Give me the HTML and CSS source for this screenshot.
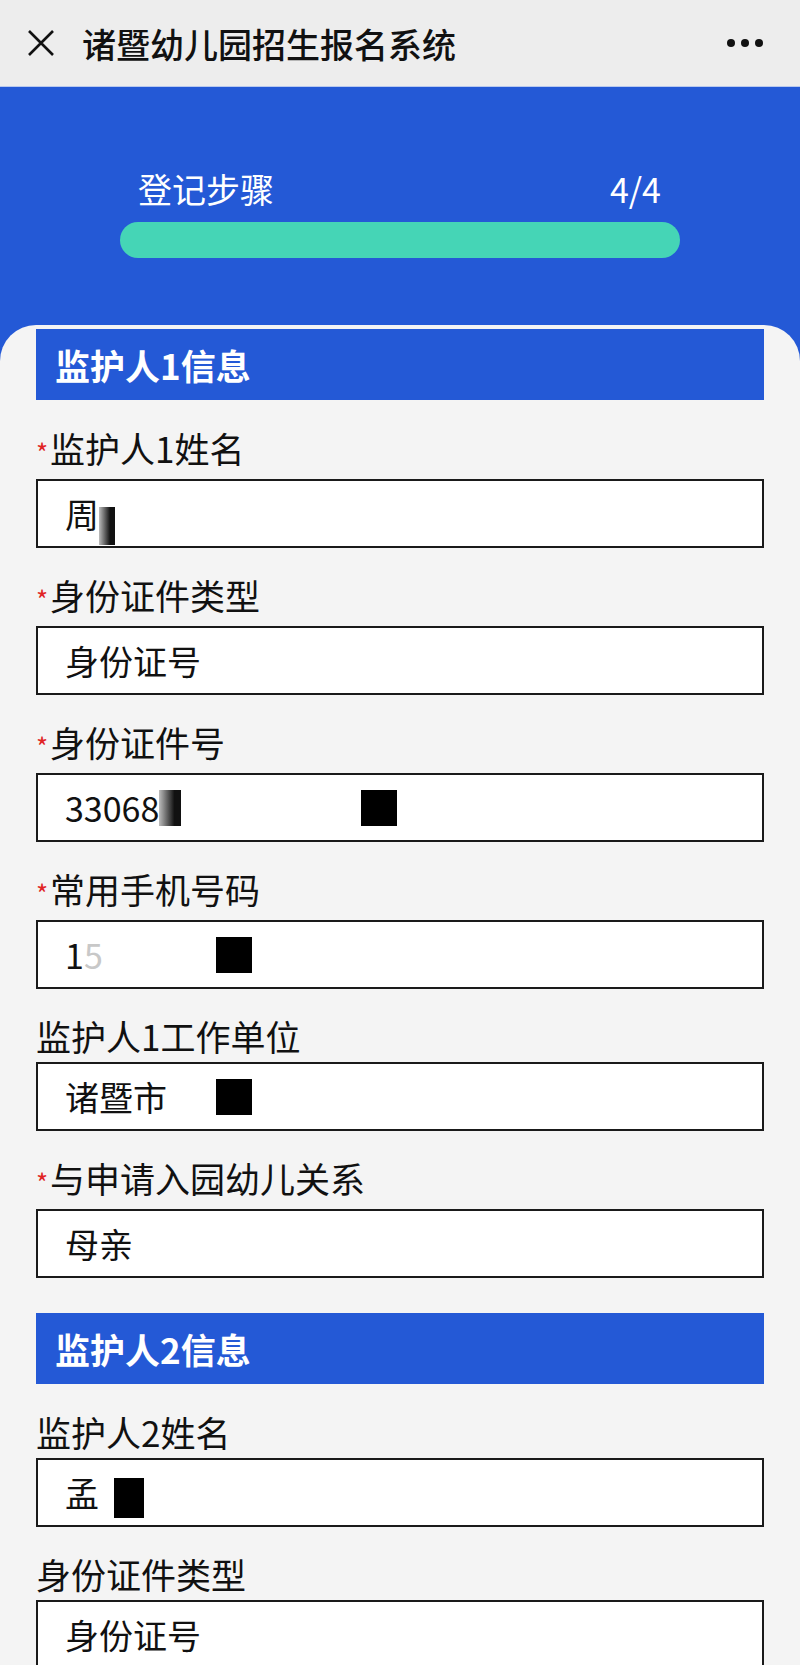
FILE: index.html
```html
<!DOCTYPE html>
<html lang="zh-CN">
<head>
    <meta charset="UTF-8">
    <meta name="viewport" content="width=device-width, initial-scale=1.0">
    <title>诸暨幼儿园招生报名系统</title>
    <link rel="stylesheet" href="styles.css">
</head>
<body>

    <!-- 顶部标题栏 -->
    <div class="top-bar">
        <svg class="close-icon" width="28" height="28" viewBox="0 0 28 28">
            <path d="M2 2 L26 26 M26 2 L2 26" stroke="#111" stroke-width="2.6" fill="none"/>
        </svg>
        <div class="top-title">诸暨幼儿园招生报名系统</div>
        <div class="more-dots">
            <span></span><span></span><span></span>
        </div>
    </div>

    <div class="page">
        <!-- 登记步骤 -->
        <div class="steps">
            <div class="steps-row">
                <span>登记步骤</span>
                <span>4/4</span>
            </div>
            <div class="steps-bar"></div>
        </div>

        <div class="card">
            <div class="section-title">监护人1信息</div>

            <div class="field">
                <div class="field-label is-required"><span class="required">*</span>监护人1姓名</div>
                <div class="field-box">周<span class="mask mask-fade mask-name1"></span></div>
            </div>

            <div class="field">
                <div class="field-label is-required"><span class="required">*</span>身份证件类型</div>
                <div class="field-box">身份证号</div>
            </div>

            <div class="field">
                <div class="field-label is-required"><span class="required">*</span>身份证件号</div>
                <div class="field-box">33068<span class="mask mask-fade mask-id1"></span><span class="mask mask-id2"></span></div>
            </div>

            <div class="field">
                <div class="field-label is-required"><span class="required">*</span>常用手机号码</div>
                <div class="field-box">1<span class="faded">5</span><span class="mask mask-phone"></span></div>
            </div>

            <div class="field">
                <div class="field-label">监护人1工作单位</div>
                <div class="field-box">诸暨市<span class="mask mask-work"></span></div>
            </div>

            <div class="field">
                <div class="field-label is-required"><span class="required">*</span>与申请入园幼儿关系</div>
                <div class="field-box">母亲</div>
            </div>

            <div class="section-title section-gap">监护人2信息</div>

            <div class="field">
                <div class="field-label">监护人2姓名</div>
                <div class="field-box">孟<span class="mask mask-name2"></span></div>
            </div>

            <div class="field">
                <div class="field-label">身份证件类型</div>
                <div class="field-box">身份证号</div>
            </div>
        </div>
    </div>

</body>
</html>
```

FILE: styles.css
```css
body {
    margin: 0;
    font-family: "Noto Sans CJK SC", "Noto Sans", sans-serif;
    color: #111;
    background-color: #2459d6;
}

/* --- 顶部标题栏 --- */
.top-bar {
    height: 86px;
    background-color: #ededed;
    border-bottom: 1px solid #b9c9ee;
    display: flex;
    align-items: center;
    padding: 0 37px 0 27px;
}

.close-icon {
    flex-shrink: 0;
}

.top-title {
    margin-left: 27px;
    font-size: 34px;
    font-weight: 500;
    flex: 1;
}

.more-dots {
    display: flex;
    gap: 6px;
}

.more-dots span {
    width: 8px;
    height: 8px;
    border-radius: 50%;
    background-color: #111;
}

/* --- 登记步骤 --- */
.steps {
    width: 560px;
    margin: 0 auto 0 120px;
    padding: 80px 0 67px;
}

.steps-row {
    display: flex;
    justify-content: space-between;
    padding: 0 19px 0 18px;
    color: #fff;
    font-size: 34px;
    line-height: 44px;
}

.steps-bar {
    margin-top: 11px;
    height: 36px;
    border-radius: 18px;
    background-color: #45d5b6;
}

/* --- 白色卡片 --- */
.card {
    background-color: #f4f4f4;
    border-radius: 36px 36px 0 0;
    padding: 4px 36px 60px;
}

.section-title {
    height: 71px;
    line-height: 71px;
    padding-left: 19px;
    background-color: #2459d6;
    color: #fff;
    font-size: 35px;
    font-weight: bold;
}

.section-gap {
    margin-top: 35px;
}

.field {
    margin-top: 27px;
}

.section-title + .field {
    margin-top: 28px;
}

.field-label {
    font-size: 35px;
    line-height: 40px;
    margin-bottom: 6px;
}

/* 必填项（带星号）的标签稍高一些 */
.field-label.is-required {
    margin-bottom: 11px;
}

.required {
    display: inline-block;
    width: 14px;
    font-size: 26px;
    line-height: 1;
    color: #e02424;
    vertical-align: 0;
}

.field-box {
    height: 69px;
    box-sizing: border-box;
    border: 2px solid #1a1a1a;
    background-color: #fff;
    padding-left: 27px;
    display: flex;
    align-items: center;
    font-size: 34px;
}

.faded {
    color: #c8c8c8;
}

/* 打码部分 */
.mask {
    display: inline-block;
    background-color: #000;
    height: 36px;
    flex-shrink: 0;
}

.mask-fade {
    background: linear-gradient(to right, #bdbdbd, #111 70%);
}

.mask-name1 {
    width: 16px;
    height: 38px;
    margin-left: 0;
    margin-top: 24px;
}

.mask-id1 {
    width: 22px;
    height: 36px;
    margin-left: 0;
}

.mask-id2 {
    width: 36px;
    margin-left: 180px;
}

.mask-phone {
    width: 36px;
    margin-left: 113px;
}

.mask-work {
    width: 36px;
    height: 36px;
    margin-left: 49px;
}

.mask-name2 {
    width: 30px;
    height: 40px;
    margin-left: 15px;
    margin-top: 10px;
}
```
